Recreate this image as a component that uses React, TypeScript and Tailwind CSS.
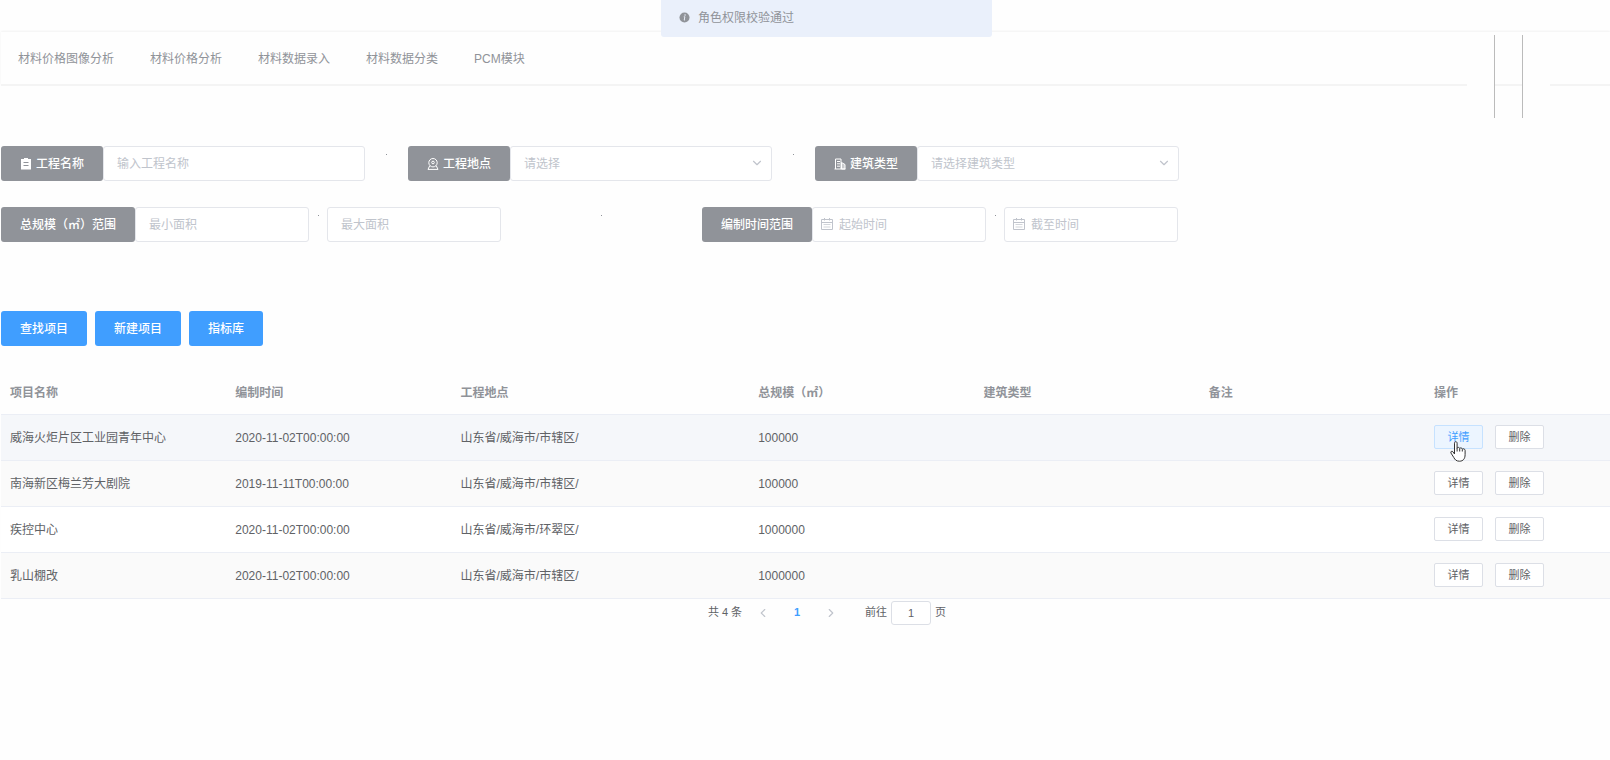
import { useState, type ReactNode } from 'react'
import { clsx } from 'clsx'
import { ChevronDown, ChevronLeft, ChevronRight } from 'lucide-react'

interface Project {
  name: string
  time: string
  location: string
  scale: string
  type: string
  remark: string
}

const navItems = ['材料价格图像分析', '材料价格分析', '材料数据录入', '材料数据分类', 'PCM模块']

const columns = [
  { title: '项目名称', width: 'w-[14%]' },
  { title: '编制时间', width: 'w-[14%]' },
  { title: '工程地点', width: 'w-[18.5%]' },
  { title: '总规模（㎡）', width: 'w-[14%]' },
  { title: '建筑类型', width: 'w-[14%]' },
  { title: '备注', width: 'w-[14%]' },
  { title: '操作', width: 'w-[11.5%]' },
]

const projects: Project[] = [
  { name: '威海火炬片区工业园青年中心', time: '2020-11-02T00:00:00', location: '山东省/威海市/市辖区/', scale: '100000', type: '', remark: '' },
  { name: '南海新区梅兰芳大剧院', time: '2019-11-11T00:00:00', location: '山东省/威海市/市辖区/', scale: '100000', type: '', remark: '' },
  { name: '疾控中心', time: '2020-11-02T00:00:00', location: '山东省/威海市/环翠区/', scale: '1000000', type: '', remark: '' },
  { name: '乳山棚改', time: '2020-11-02T00:00:00', location: '山东省/威海市/市辖区/', scale: '1000000', type: '', remark: '' },
]

const boxClass =
  'h-[35px] w-full rounded-[3px] border border-[#e4e6eb] bg-white text-xs text-[#606266] outline-none placeholder:text-[#c0c4cc] focus:border-[#409eff]'

function OrderIcon() {
  return (
    <svg viewBox="0 0 12 12" className="size-3" aria-hidden="true">
      <path fill="currentColor" fillRule="evenodd" d="M4 0h4v1h3v10.5H1V1h3zM3.5 4v1h5V4zm0 3v1h5V7z" />
    </svg>
  )
}

function LocationIcon() {
  return (
    <svg viewBox="0 0 12 12" className="size-3" fill="none" stroke="currentColor" aria-hidden="true">
      <circle cx="6" cy="4.7" r="4.2" />
      <circle cx="6" cy="4.5" r="1.3" />
      <path d="M2.8 7.6L1 11.4h10L9.2 7.6" />
    </svg>
  )
}

function BuildingIcon() {
  return (
    <svg viewBox="0 0 12 12" className="size-3" fill="none" stroke="currentColor" aria-hidden="true">
      <path d="M1.500 11V1H7v10M.5 11h11M3 3.500h3M3 5.800h3M3 8.200h3" />
      <path d="M7.500 4.500l3.500 2V11H7.500z" fill="currentColor" fillOpacity=".5" />
    </svg>
  )
}

function CalendarIcon() {
  return (
    <svg viewBox="0 0 12 12" className="size-3" fill="none" stroke="currentColor" aria-hidden="true">
      <path d="M.5 1.500h11v10H.5zM.5 4.500h11M3.500 0v2.500M8.500 0v2.500" />
      <path d="M2.500 6.500h7M2.500 9h7" strokeOpacity=".7" />
    </svg>
  )
}

function InfoIcon() {
  return (
    <svg viewBox="0 0 12 12" className="size-[11px]" aria-hidden="true">
      <circle cx="6" cy="6" r="5.500" fill="#909399" />
      <circle cx="6.600" cy="3.300" r=".8" fill="#edf2fc" />
      <path d="M5.200 5.200h1.200l-.7 3.600h.9" fill="none" stroke="#edf2fc" />
    </svg>
  )
}

function HandCursor() {
  return (
    <svg viewBox="0 0 17 21" className="pointer-events-none absolute top-4 left-4 z-10 h-[21px] w-[17px]" aria-hidden="true">
      <path
        d="M4.500 13V2.200c0-2 2.600-2 2.600 0v5c.3-1.200 2.500-1.100 2.600.4.5-1.100 2.500-.9 2.600.7.6-.9 2.600-.7 2.800 1v4.400c0 3.800-1.800 6.500-5.600 6.500-3.200 0-4.600-1.500-5.700-3.700L1 12.100c-.8-1.700 1.100-2.500 2-1.200z"
        fill="#fff"
        stroke="#333"
        strokeLinejoin="round"
      />
      <path d="M7.100 7v3.500M9.700 7.800v2.700M12.300 8.500v2" stroke="#333" fill="none" />
    </svg>
  )
}

function FieldLabel({ htmlFor, className, children }: { htmlFor: string; className: string; children: ReactNode }) {
  return (
    <label
      htmlFor={htmlFor}
      className={clsx('flex h-[35px] shrink-0 items-center justify-center gap-1 rounded-[3px] bg-[#909399] text-xs font-medium whitespace-nowrap text-white', className)}
    >
      {children}
    </label>
  )
}

function Spacer({ className }: { className: string }) {
  return (
    <span className={clsx('flex shrink-0 justify-center pt-2', className)} aria-hidden="true">
      <span className="size-px bg-[#909399]" />
    </span>
  )
}

function SelectBox({ id, placeholder }: { id: string; placeholder: string }) {
  return (
    <div className="relative w-[262px]">
      <select id={id} defaultValue="" className={clsx(boxClass, 'appearance-none px-[13px] text-[#c0c4cc]')}>
        <option value="">{placeholder}</option>
      </select>
      <ChevronDown className="pointer-events-none absolute top-[10px] right-2 size-[14px] text-[#c0c4cc]" strokeWidth={2} aria-hidden="true" />
    </div>
  )
}

function DateBox({ id, placeholder, label }: { id: string; placeholder: string; label?: string }) {
  return (
    <div className="relative w-[174px]">
      <input id={id} type="text" placeholder={placeholder} aria-label={label} className={clsx(boxClass, 'pr-3 pl-[26px]')} />
      <span className="pointer-events-none absolute top-[11px] left-[9px] text-[#c0c4cc]">
        <CalendarIcon />
      </span>
    </div>
  )
}

function RowButton({ active, children }: { active?: boolean; children: ReactNode }) {
  return (
    <button
      type="button"
      className={clsx(
        'h-6 w-[49px] rounded-[2px] border text-[11px] leading-none',
        active ? 'border-[#c6e2ff] bg-[#ecf5ff] text-[#409eff]' : 'border-[#dcdfe6] bg-white text-[#606266]',
      )}
    >
      {children}
    </button>
  )
}

export default function App() {
  const [page, setPage] = useState('1')

  return (
    <div className="relative min-h-screen overflow-x-hidden bg-[#fefefe] pt-8 pl-px font-['Liberation_Sans','Noto_Sans_CJK_SC',sans-serif] text-xs text-[#606266]">
      <div
        role="alert"
        className="absolute top-0 left-[661px] z-20 flex h-[37px] w-[331px] items-center gap-2 rounded-b-[3px] bg-[#eaf0fb] pb-[2px] pl-[18px] text-[#909399]"
      >
        <InfoIcon />
        <p>角色权限校验通过</p>
      </div>

      <header className="relative">
        <nav className="flex h-[54px] items-center gap-9 border-b-2 border-[#f4f4f4] pt-px pl-[17px] shadow-[0_-1px_2px_rgba(0,0,0,0.05)]">
          {navItems.map((item) => (
            <a key={item} href="#" className="whitespace-nowrap text-[#909399]">
              {item}
            </a>
          ))}
        </nav>
        {/* narrow rail that hangs over the nav border */}
        <div className="absolute top-[3px] right-[60px] flex h-[83px]" aria-hidden="true">
          <div className="w-[27px] bg-[#fefefe]" />
          <div className="w-[29px] border-x border-[#bbbbbb]" />
          <div className="w-[27px] bg-[#fefefe]" />
        </div>
      </header>

      <form className="mt-[60px]" onSubmit={(e) => e.preventDefault()}>
        <div className="flex">
          <FieldLabel htmlFor="name" className="w-[102px]">
            <OrderIcon />
            工程名称
          </FieldLabel>
          <div className="w-[262px]">
            <input id="name" type="text" placeholder="输入工程名称" className={clsx(boxClass, 'px-[13px]')} />
          </div>
          <Spacer className="w-[43px]" />
          <FieldLabel htmlFor="location" className="w-[102px]">
            <LocationIcon />
            工程地点
          </FieldLabel>
          <SelectBox id="location" placeholder="请选择" />
          <Spacer className="w-[43px]" />
          <FieldLabel htmlFor="type" className="w-[102px]">
            <BuildingIcon />
            建筑类型
          </FieldLabel>
          <SelectBox id="type" placeholder="请选择建筑类型" />
        </div>

        <div className="mt-[26px] flex">
          <FieldLabel htmlFor="area-min" className="w-[134px]">
            总规模（㎡）范围
          </FieldLabel>
          <div className="w-[174px]">
            <input id="area-min" type="text" placeholder="最小面积" className={clsx(boxClass, 'px-[13px]')} />
          </div>
          <Spacer className="w-[18px]" />
          <div className="w-[174px]">
            <input id="area-max" type="text" placeholder="最大面积" aria-label="最大面积" className={clsx(boxClass, 'px-[13px]')} />
          </div>
          <Spacer className="w-[201px]" />
          <FieldLabel htmlFor="date-start" className="w-[110px]">
            编制时间范围
          </FieldLabel>
          <DateBox id="date-start" placeholder="起始时间" />
          <Spacer className="w-[18px]" />
          <DateBox id="date-end" placeholder="截至时间" label="截至时间" />
        </div>

        <div className="mt-[69px] flex gap-2">
          {['查找项目', '新建项目', '指标库'].map((text) => (
            <button key={text} type="button" className="h-[35px] rounded-[3px] bg-[#409eff] px-[19px] font-medium text-white">
              {text}
            </button>
          ))}
        </div>
      </form>

      <table className="mt-[25px] w-full table-fixed border-collapse text-left">
        <thead>
          <tr className="h-[43px] border-b border-[#ebeef5] text-[#909399]">
            {columns.map((col) => (
              <th key={col.title} scope="col" className={clsx('px-[9px] pt-[2px] font-bold', col.width)}>
                {col.title}
              </th>
            ))}
          </tr>
        </thead>
        <tbody>
          {projects.map((project, i) => (
            <tr
              key={project.name}
              className={clsx('h-[46px] border-b border-[#ebeef5]', i === 0 ? 'bg-[#f5f7fa]' : i % 2 === 1 ? 'bg-[#fafafa]' : 'bg-white')}
            >
              <td className="px-[9px] pt-[2px]">{project.name}</td>
              <td className="px-[9px] pt-[2px]">{project.time}</td>
              <td className="px-[9px] pt-[2px]">{project.location}</td>
              <td className="px-[9px] pt-[2px]">{project.scale}</td>
              <td className="px-[9px] pt-[2px]">{project.type}</td>
              <td className="px-[9px] pt-[2px]">{project.remark}</td>
              <td className="px-[9px]">
                <div className="relative flex gap-3">
                  <RowButton active={i === 0}>详情</RowButton>
                  <RowButton>删除</RowButton>
                  {i === 0 && <HandCursor />}
                </div>
              </td>
            </tr>
          ))}
        </tbody>
      </table>

      <div className="flex items-center justify-center pt-[2px] pl-[43px] text-[11px]">
        <span className="mr-[14px]">共 4 条</span>
        <button type="button" aria-label="上一页" className="text-[#c0c4cc]">
          <ChevronLeft className="size-[14px]" />
        </button>
        <button type="button" aria-current="page" className="w-[54px] font-bold text-[#409eff]">
          1
        </button>
        <button type="button" aria-label="下一页" className="text-[#c0c4cc]">
          <ChevronRight className="size-[14px]" />
        </button>
        <label htmlFor="page" className="mr-1 ml-[27px]">
          前往
        </label>
        <input
          id="page"
          type="text"
          value={page}
          onChange={(e) => setPage(e.target.value)}
          className="h-6 w-10 rounded-[3px] border border-[#dcdfe6] bg-white text-center outline-none"
        />
        <span className="ml-1">页</span>
      </div>
    </div>
  )
}
